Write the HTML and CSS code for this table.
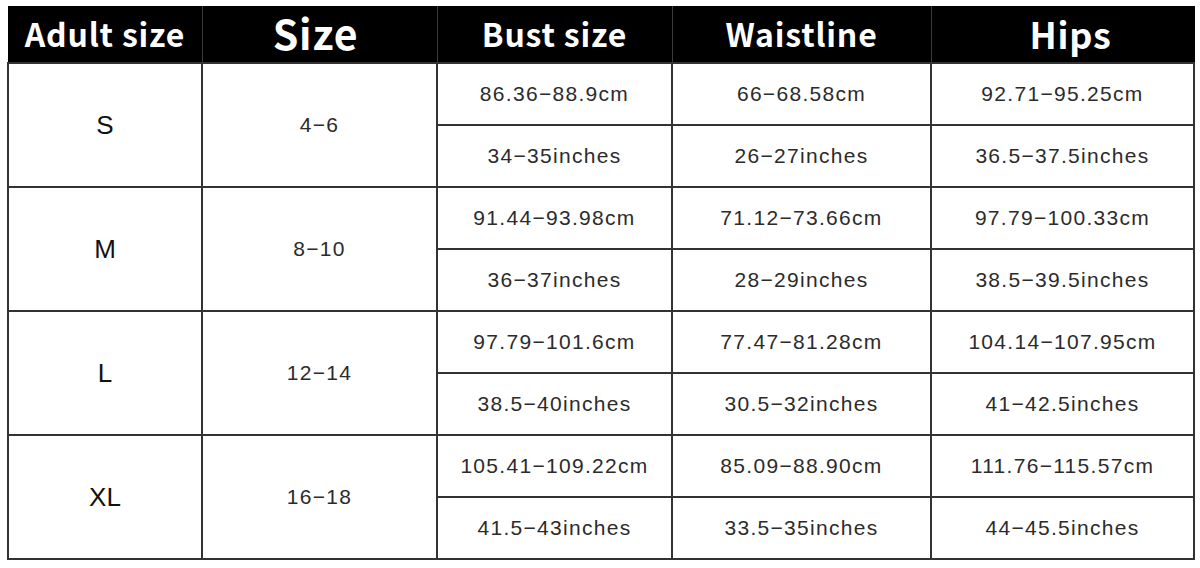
FILE: index.html
```html
<!DOCTYPE html>
<html>
<head>
<meta charset="utf-8">
<link rel="stylesheet" href="styles.css">
</head>
<body>
<table class="chart">
  <colgroup>
    <col class="c1"><col class="c2"><col class="c3"><col class="c4"><col class="c5">
  </colgroup>
  <thead>
    <tr>
      <th>Adult size</th>
      <th class="big">Size</th>
      <th>Bust size</th>
      <th>Waistline</th>
      <th class="hips">Hips</th>
    </tr>
  </thead>
  <tbody>
    <tr>
      <td rowspan="2" class="label">S</td>
      <td rowspan="2">4−6</td>
      <td>86.36−88.9cm</td><td>66−68.58cm</td><td>92.71−95.25cm</td>
    </tr>
    <tr class="sub"><td>34−35inches</td><td>26−27inches</td><td>36.5−37.5inches</td></tr>
    <tr>
      <td rowspan="2" class="label">M</td>
      <td rowspan="2">8−10</td>
      <td>91.44−93.98cm</td><td>71.12−73.66cm</td><td>97.79−100.33cm</td>
    </tr>
    <tr class="sub"><td>36−37inches</td><td>28−29inches</td><td>38.5−39.5inches</td></tr>
    <tr>
      <td rowspan="2" class="label">L</td>
      <td rowspan="2">12−14</td>
      <td>97.79−101.6cm</td><td>77.47−81.28cm</td><td>104.14−107.95cm</td>
    </tr>
    <tr class="sub"><td>38.5−40inches</td><td>30.5−32inches</td><td>41−42.5inches</td></tr>
    <tr>
      <td rowspan="2" class="label">XL</td>
      <td rowspan="2">16−18</td>
      <td>105.41−109.22cm</td><td>85.09−88.90cm</td><td>111.76−115.57cm</td>
    </tr>
    <tr class="sub"><td>41.5−43inches</td><td>33.5−35inches</td><td>44−45.5inches</td></tr>
  </tbody>
</table>
</body>
</html>
```
FILE: styles.css
```css
html, body {
  margin: 0;
  padding: 0;
  background: #fff;
}
body {
  padding: 6px 0 0 7px;
}
.chart {
  border-collapse: collapse;
  table-layout: fixed;
  width: 1186px;
}
.c1 { width: 194px; }
.c2 { width: 235px; }
.c3 { width: 235px; }
.c4 { width: 259px; }
.c5 { width: 263px; }
.chart th {
  background: #000;
  color: #fff;
  height: 51px;
  padding: 0 0 4px 0;
  font-family: "Noto Sans CJK SC", "Open Sans", sans-serif;
  font-weight: 700;
  font-size: 32px;
  line-height: 1;
  text-align: center;
  border-left: 1px solid #3a3a3a;
  border-right: 1px solid #3a3a3a;
  border-top: 1px solid #000;
  border-bottom: 2px solid #333;
  letter-spacing: 0.8px;
}
.chart th:first-child { border-left-color: #000; }
.chart th:last-child { border-right-color: #000; }
.chart th.big { font-size: 41px; padding-right: 8px; }
.chart th.hips { font-size: 36px; padding-left: 16px; }
.chart td {
  height: 60px;
  padding: 0;
  border: 2px solid #333;
  text-align: center;
  font-family: "Liberation Sans", Arial, sans-serif;
  font-size: 21px;
  letter-spacing: 1.3px;
  color: #2b2b2b;
}
.chart tr.sub td {
  border-top-color: #555;
}
.chart td.label {
  font-size: 26px;
  letter-spacing: 0;
  color: #111;
}
```
